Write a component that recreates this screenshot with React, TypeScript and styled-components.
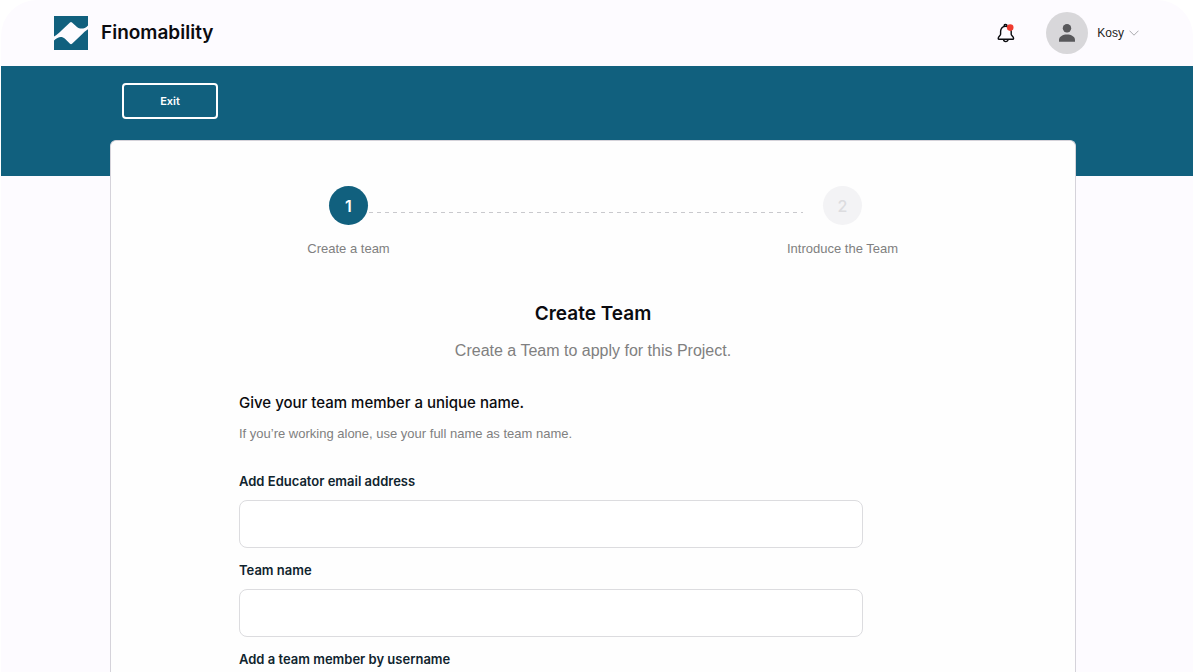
import React from "react";
import styled, { createGlobalStyle } from "styled-components";

const teal = "#11607e";
const displayFont = `Inter, "Liberation Sans", Arial, sans-serif`;

const GlobalStyle = createGlobalStyle`
  *, *::before, *::after { box-sizing: border-box; }
  body {
    margin: 0;
    background: #ffffff;
    color: #0b0b0f;
    font-family: "Liberation Sans", Arial, sans-serif;
  }
  h1, h2, p { margin: 0; }
`;

const Page = styled.div`
  min-height: 100vh;
  display: flex;
  flex-direction: column;
  margin: 0 1px;
  background: #fdfbff;
  border-radius: 36px 36px 0 0;
`;

const Header = styled.header`
  height: 66px;
  padding: 0 54px 0 53px;
  display: flex;
  align-items: center;
  justify-content: space-between;
`;

const Brand = styled.a`
  display: flex;
  align-items: center;
  gap: 13px;
  color: inherit;
  text-decoration: none;
  font-family: ${displayFont};
  font-size: 19px;
  line-height: 24px;
  font-weight: 600;
`;

const HeaderActions = styled.div`
  display: flex;
  align-items: center;
  gap: 31px;
`;

const IconButton = styled.button`
  display: flex;
  padding: 0;
  border: 0;
  background: none;
`;

const UserMenu = styled.button`
  display: flex;
  align-items: center;
  gap: 9px;
  padding: 0;
  border: 0;
  background: none;
  color: #1c1c20;
  font-family: inherit;
  font-size: 12px;
  line-height: 16px;
`;

const UserName = styled.span`
  display: flex;
  align-items: center;
  gap: 5px;
`;

const Banner = styled.div`
  height: 110px;
  padding: 17px 121px;
  background: ${teal};
`;

const ExitButton = styled.button`
  width: 96px;
  height: 36px;
  border: 2px solid #ffffff;
  border-radius: 4px;
  background: transparent;
  color: #ffffff;
  font-family: ${displayFont};
  font-size: 11px;
  font-weight: 600;
`;

const Main = styled.main`
  flex: 1;
  display: flex;
  margin-top: -36px;
  padding: 0 117px 0 109px;
`;

const Card = styled.section`
  flex: 1;
  min-width: 0;
  padding: 45px 128px 40px;
  background: #fefefe;
  border: 1px solid #d5d3da;
  border-bottom: 0;
  border-radius: 6px 6px 0 0;
`;

const Stepper = styled.ol`
  list-style: none;
  display: flex;
  align-items: flex-start;
  margin: 0;
  padding: 0 85px 0 90px;
`;

const Step = styled.li`
  width: 39px;
  display: flex;
  flex-direction: column;
  align-items: center;
  gap: 14px;
`;

const StepNumber = styled.span<{ $active?: boolean }>`
  width: 39px;
  height: 39px;
  border-radius: 50%;
  display: flex;
  align-items: center;
  justify-content: center;
  background: ${({ $active }) => ($active ? teal : "#f3f3f5")};
  color: ${({ $active }) => ($active ? "#ffffff" : "#dcdcdf")};
  font-family: ${displayFont};
  font-size: 16px;
  font-weight: ${({ $active }) => ($active ? 600 : 500)};
`;

const StepLabel = styled.span`
  color: #808080;
  font-size: 13px;
  line-height: 20px;
  white-space: nowrap;
`;

const StepLine = styled.li`
  flex: 1;
  height: 1px;
  margin: 26px 20px 0 1px;
  background: repeating-linear-gradient(to right, #c9c9cd 0 4px, transparent 4px 8px);
`;

const Intro = styled.div`
  display: flex;
  flex-direction: column;
  align-items: center;
  gap: 12px;
  margin-top: 42px;
`;

const Title = styled.h1`
  font-family: ${displayFont};
  font-size: 19px;
  line-height: 26px;
  font-weight: 600;
`;

const Subtitle = styled.p`
  color: #808080;
  font-size: 16px;
  line-height: 24px;
`;

const Form = styled.form`
  max-width: 624px;
  margin-top: 28px;
`;

const FormTitle = styled.h2`
  font-family: ${displayFont};
  font-size: 15px;
  line-height: 24px;
  font-weight: 500;
`;

const Hint = styled.p`
  margin-top: 9px;
  color: #808080;
  font-size: 13px;
  line-height: 20px;
`;

const Fields = styled.div`
  display: flex;
  flex-direction: column;
  gap: 12px;
  margin-top: 27px;
`;

const Field = styled.div`
  display: flex;
  flex-direction: column;
  gap: 9px;
`;

const Label = styled.label`
  color: #10242e;
  font-family: ${displayFont};
  font-size: 13px;
  line-height: 20px;
  font-weight: 600;
`;

const Input = styled.input`
  width: 100%;
  height: 48px;
  padding: 0 16px;
  border: 1px solid #dcdcdf;
  border-radius: 8px;
  background: #ffffff;
  font: inherit;
`;

const Logo = () => (
  <svg width="34" height="34" viewBox="0 0 34 34" aria-hidden="true">
    <rect width="34" height="34" fill={teal} />
    <path
      d="M0 20.5 C3 18.8 5 17 7.5 14.5 L16 6.4 Q17 5.5 18 6.4 L23 11 C26 13.4 30.5 13.2 34 9.4 V13.3 C31.5 14.8 29.5 16.7 27 19.2 L18 27.7 Q17 28.6 16 27.7 L11 22.8 C8 20 4 20.4 0 24.6 Z"
      fill="#fdfbff"
    />
  </svg>
);

const Bell = () => (
  <svg width="18" height="20" viewBox="0 0 18 20" fill="none" aria-hidden="true">
    <path
      d="M7.2 3.2 V2.6 C7.2 .9 10 .9 10 2.6 V3.2 M8.6 3.2 C5.6 3.2 3.6 5.6 3.6 8.6 V11.2 C3.6 12.6 1.2 13.6 1.2 15.4 C1.2 16 1.6 16.3 2.2 16.3 H15.6 C16.2 16.3 16.6 16 16.6 15.4 C16.6 13.6 14.2 12.6 14.2 11.2 V8.6 C14.2 5.6 12 3.2 8.6 3.2 Z M6.6 16.5 C6.6 19.3 11 19.3 11 16.5"
      stroke="#0b0b0f"
      strokeWidth="1.4"
      strokeLinejoin="round"
    />
    <circle cx="13.2" cy="4.6" r="3.3" fill="#f03a2e" />
  </svg>
);

const Avatar = () => (
  <svg width="42" height="42" viewBox="0 0 42 42" aria-hidden="true">
    <circle cx="21" cy="21" r="21" fill="#d8d7da" />
    <circle cx="21" cy="16.3" r="4.2" fill="#58585b" />
    <path d="M13 29.8 V28.2 C13 24.4 17 22.6 21 22.6 C25 22.6 29 24.4 29 28.2 V29.8 Z" fill="#58585b" />
  </svg>
);

const Chevron = () => (
  <svg width="10" height="6" viewBox="0 0 10 6" fill="none" aria-hidden="true">
    <path d="M.5 .7 L5 5.2 L9.5 .7" stroke="#aaaaae" strokeWidth="1" />
  </svg>
);

const fields = [
  { id: "educator", label: "Add Educator email address", type: "email" },
  { id: "team", label: "Team name", type: "text" },
  { id: "member", label: "Add a team member by username", type: "text" },
];

export default function App() {
  return (
    <>
      <GlobalStyle />
      <Page>
        <Header>
          <Brand href="#">
            <Logo />
            Finomability
          </Brand>
          <HeaderActions>
            <IconButton type="button" aria-label="Notifications">
              <Bell />
            </IconButton>
            <UserMenu type="button">
              <Avatar />
              <UserName>
                Kosy
                <Chevron />
              </UserName>
            </UserMenu>
          </HeaderActions>
        </Header>
        <Banner>
          <ExitButton type="button">Exit</ExitButton>
        </Banner>
        <Main>
          <Card>
            <Stepper>
              <Step aria-current="step">
                <StepNumber $active>1</StepNumber>
                <StepLabel>Create a team</StepLabel>
              </Step>
              <StepLine aria-hidden="true" />
              <Step>
                <StepNumber>2</StepNumber>
                <StepLabel>Introduce the Team</StepLabel>
              </Step>
            </Stepper>
            <Intro>
              <Title>Create Team</Title>
              <Subtitle>Create a Team to apply for this Project.</Subtitle>
            </Intro>
            <Form>
              <FormTitle>Give your team member a unique name.</FormTitle>
              <Hint>If you’re working alone, use your full name as team name.</Hint>
              <Fields>
                {fields.map(({ id, label, type }) => (
                  <Field key={id}>
                    <Label htmlFor={id}>{label}</Label>
                    <Input id={id} name={id} type={type} />
                  </Field>
                ))}
              </Fields>
            </Form>
          </Card>
        </Main>
      </Page>
    </>
  );
}
